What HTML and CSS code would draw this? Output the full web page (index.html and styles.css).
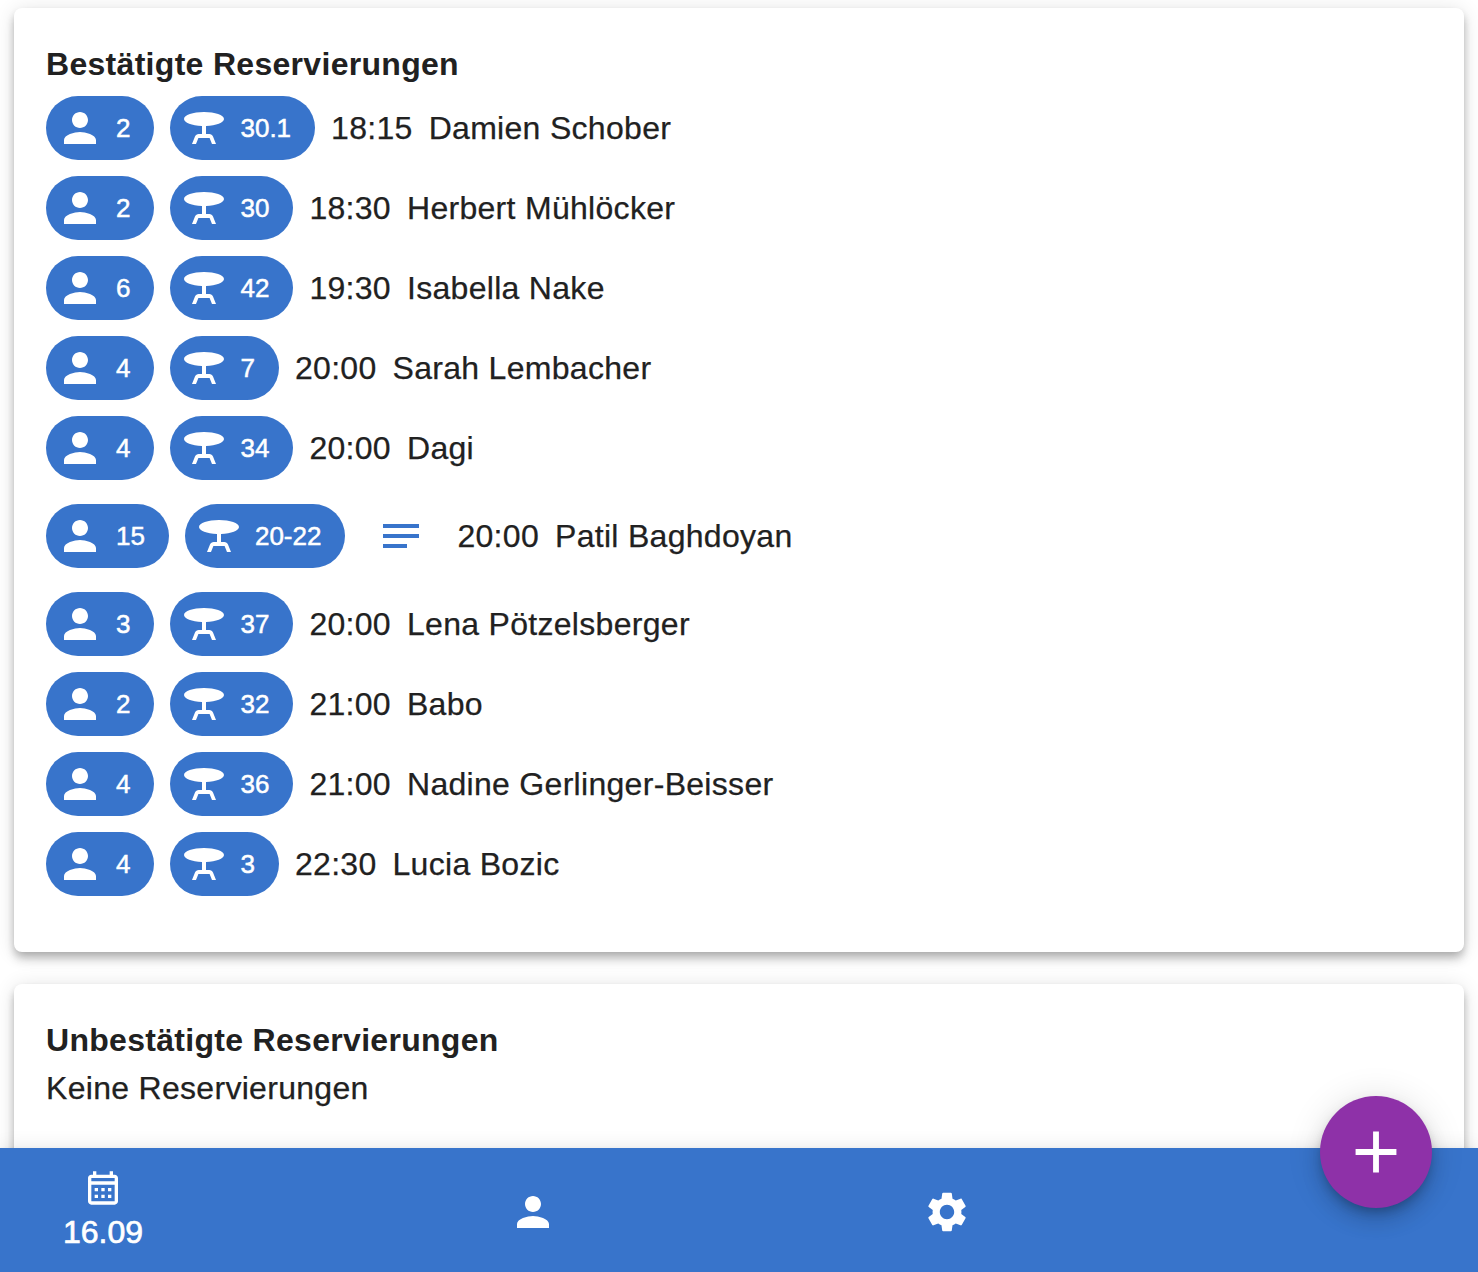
FILE: index.html
```html
<!DOCTYPE html>
<html lang="de">
<head>
<meta charset="utf-8">
<title>Reservierungen</title>
<link rel="stylesheet" href="styles.css">
</head>
<body>
<svg class="sprite" aria-hidden="true">
  <symbol id="person" viewBox="0 0 24 24"><path d="M12 12c2.21 0 4-1.79 4-4s-1.79-4-4-4-4 1.79-4 4 1.79 4 4 4zm0 2c-2.67 0-8 1.34-8 4v2h16v-2c0-2.66-5.33-4-8-4z"/></symbol>
  <symbol id="table" viewBox="0 0 24 24"><path d="M22 7.5C22 5.57 17.52 4 12 4S2 5.57 2 7.5c0 1.81 3.95 3.31 9 3.48V15H9.35c-.82 0-1.55.5-1.86 1.26L6 20h2l1.2-3h5.6l1.2 3h2l-1.5-3.74c-.3-.76-1.04-1.26-1.85-1.26H13v-4.02c5.05-.17 9-1.67 9-3.48z"/></symbol>
  <symbol id="notes" viewBox="0 0 24 24"><path d="M3 18h12v-2H3v2zM3 6v2h18V6H3zm0 7h18v-2H3v2z"/></symbol>
  <symbol id="calendar" viewBox="0 0 24 24"><path d="M19 4h-1V2h-2v2H8V2H6v2H5c-1.11 0-1.99.9-1.99 2L3 20c0 1.1.89 2 2 2h14c1.1 0 2-.9 2-2V6c0-1.1-.9-2-2-2zm0 16H5V10h14v10zm0-12H5V6h14v2zM9 14H7v-2h2v2zm4 0h-2v-2h2v2zm4 0h-2v-2h2v2zm-8 4H7v-2h2v2zm4 0h-2v-2h2v2zm4 0h-2v-2h2v2z"/></symbol>
  <symbol id="settings" viewBox="0 0 24 24"><path d="M19.14 12.94c.04-.3.06-.61.06-.94 0-.32-.02-.64-.07-.94l2.03-1.58c.18-.14.23-.41.12-.61l-1.92-3.32c-.12-.22-.37-.29-.59-.22l-2.39.96c-.5-.38-1.03-.7-1.62-.94l-.36-2.54c-.04-.24-.24-.41-.48-.41h-3.84c-.24 0-.43.17-.47.41l-.36 2.54c-.59.24-1.13.57-1.62.94l-2.39-.96c-.22-.08-.47 0-.59.22L2.74 8.87c-.12.21-.08.47.12.61l2.03 1.58c-.05.3-.09.63-.09.94s.02.64.07.94l-2.03 1.58c-.18.14-.23.41-.12.61l1.92 3.32c.12.22.37.29.59.22l2.39-.96c.5.38 1.03.7 1.62.94l.36 2.54c.05.24.24.41.48.41h3.84c.24 0 .44-.17.47-.41l.36-2.54c.59-.24 1.13-.56 1.62-.94l2.39.96c.22.08.47 0 .59-.22l1.92-3.32c.12-.22.07-.47-.12-.61l-2.01-1.58zM12 15.6c-1.98 0-3.6-1.62-3.6-3.6s1.62-3.6 3.6-3.6 3.6 1.62 3.6 3.6-1.62 3.6-3.6 3.6z"/></symbol>
  <symbol id="add" viewBox="0 0 24 24"><path d="M19 13h-6v6h-2v-6H5v-2h6V5h2v6h6v2z"/></symbol>
</svg>

<main class="content">
  <section class="card">
    <h2 class="title">Bestätigte Reservierungen</h2>
    <ul class="list">
      <li class="row"><span class="chip"><svg class="icon"><use href="#person"/></svg>2</span><span class="chip"><svg class="icon"><use href="#table"/></svg>30.1</span><span>18:15</span><span>Damien Schober</span></li>
      <li class="row"><span class="chip"><svg class="icon"><use href="#person"/></svg>2</span><span class="chip"><svg class="icon"><use href="#table"/></svg>30</span><span>18:30</span><span>Herbert Mühlöcker</span></li>
      <li class="row"><span class="chip"><svg class="icon"><use href="#person"/></svg>6</span><span class="chip"><svg class="icon"><use href="#table"/></svg>42</span><span>19:30</span><span>Isabella Nake</span></li>
      <li class="row"><span class="chip"><svg class="icon"><use href="#person"/></svg>4</span><span class="chip"><svg class="icon"><use href="#table"/></svg>7</span><span>20:00</span><span>Sarah Lembacher</span></li>
      <li class="row"><span class="chip"><svg class="icon"><use href="#person"/></svg>4</span><span class="chip"><svg class="icon"><use href="#table"/></svg>34</span><span>20:00</span><span>Dagi</span></li>
      <li class="row"><span class="chip"><svg class="icon"><use href="#person"/></svg>15</span><span class="chip"><svg class="icon"><use href="#table"/></svg>20-22</span><button class="icon-button note" aria-label="Notiz"><svg class="icon"><use href="#notes"/></svg></button><span>20:00</span><span>Patil Baghdoyan</span></li>
      <li class="row"><span class="chip"><svg class="icon"><use href="#person"/></svg>3</span><span class="chip"><svg class="icon"><use href="#table"/></svg>37</span><span>20:00</span><span>Lena Pötzelsberger</span></li>
      <li class="row"><span class="chip"><svg class="icon"><use href="#person"/></svg>2</span><span class="chip"><svg class="icon"><use href="#table"/></svg>32</span><span>21:00</span><span>Babo</span></li>
      <li class="row"><span class="chip"><svg class="icon"><use href="#person"/></svg>4</span><span class="chip"><svg class="icon"><use href="#table"/></svg>36</span><span>21:00</span><span>Nadine Gerlinger-Beisser</span></li>
      <li class="row"><span class="chip"><svg class="icon"><use href="#person"/></svg>4</span><span class="chip"><svg class="icon"><use href="#table"/></svg>3</span><span>22:30</span><span>Lucia Bozic</span></li>
    </ul>
  </section>
  <section class="card">
    <h2 class="title">Unbestätigte Reservierungen</h2>
    <p class="empty">Keine Reservierungen</p>
  </section>
</main>

<nav class="bar">
  <button class="date-button"><svg class="icon icon-small"><use href="#calendar"/></svg>16.09</button>
  <button class="icon-button" aria-label="Personen"><svg class="icon"><use href="#person"/></svg></button>
  <button class="icon-button" aria-label="Einstellungen"><svg class="icon"><use href="#settings"/></svg></button>
  <button class="fab" aria-label="Hinzufügen"><svg class="icon icon-large"><use href="#add"/></svg></button>
</nav>
</body>
</html>
```

FILE: styles.css
```css
* {
  box-sizing: border-box;
}

body {
  margin: 0;
  height: 100vh;
  overflow: hidden;
  display: flex;
  flex-direction: column;
  background: #fff;
  color: #212121;
  font: 32px/48px "Liberation Sans", Helvetica, Arial, sans-serif;
  letter-spacing: 0.3px;
  -webkit-text-stroke: 0.25px currentColor;
}

button {
  border: 0;
  background: none;
  color: inherit;
  font: inherit;
}

.sprite {
  display: none;
}

.icon {
  display: block;
  width: 48px;
  height: 48px;
  flex: none;
  fill: currentColor;
}

.icon-small {
  width: 40px;
  height: 40px;
}

.icon-large {
  width: 70px;
  height: 70px;
}

.content {
  height: 1148px;
  flex: none;
  padding: 8px 14px 0;
  display: flex;
  flex-direction: column;
  gap: 32px;
  overflow: hidden;
}

.card {
  flex: none;
  padding: 32px;
  border-radius: 8px;
  background: #fff;
  box-shadow: 0 4px 8px -2px rgba(0, 0, 0, 0.2), 0 8px 10px 0 rgba(0, 0, 0, 0.14), 0 2px 20px 0 rgba(0, 0, 0, 0.12);
}

.card:last-child {
  height: 240px;
}

.title,
.empty {
  margin: 0;
  font-size: 32px;
}

.title {
  -webkit-text-stroke: 0;
}

.list {
  margin: 0;
  padding: 8px 0 24px;
  display: flex;
  flex-direction: column;
  gap: 16px;
  list-style: none;
}

.row {
  display: flex;
  align-items: center;
  gap: 16px;
}

.chip {
  height: 64px;
  padding: 0 24px 0 10px;
  display: flex;
  align-items: center;
  gap: 12px;
  border-radius: 32px;
  background: #3874cb;
  color: #fff;
  font-size: 26px;
  letter-spacing: 0;
  -webkit-text-stroke: 0.5px #fff;
}

.icon-button {
  padding: 16px;
}

.note {
  color: #3874cb;
}

.bar {
  position: relative;
  height: 128px;
  flex: none;
  padding: 0 46px 0 47px;
  display: flex;
  align-items: center;
  justify-content: space-between;
  background: #3874cb;
  color: #fff;
  box-shadow: 0 4px 8px -2px rgba(0, 0, 0, 0.2), 0 8px 10px 0 rgba(0, 0, 0, 0.14), 0 2px 20px 0 rgba(0, 0, 0, 0.12);
}

.date-button {
  width: 112px;
  padding: 0;
  display: flex;
  flex-direction: column;
  align-items: center;
  letter-spacing: 0;
  -webkit-text-stroke: 0.7px #fff;
}

.icon {
  stroke: none;
  -webkit-text-stroke: 0;
}

.fab {
  width: 112px;
  height: 112px;
  margin: -52px 0 0 -1px;
  padding: 0;
  align-self: flex-start;
  display: flex;
  align-items: center;
  justify-content: center;
  border-radius: 50%;
  background: #8e31a8;
  box-shadow: 0 6px 10px -2px rgba(0, 0, 0, 0.2), 0 12px 20px 0 rgba(0, 0, 0, 0.14), 0 2px 36px 0 rgba(0, 0, 0, 0.12);
}
```
